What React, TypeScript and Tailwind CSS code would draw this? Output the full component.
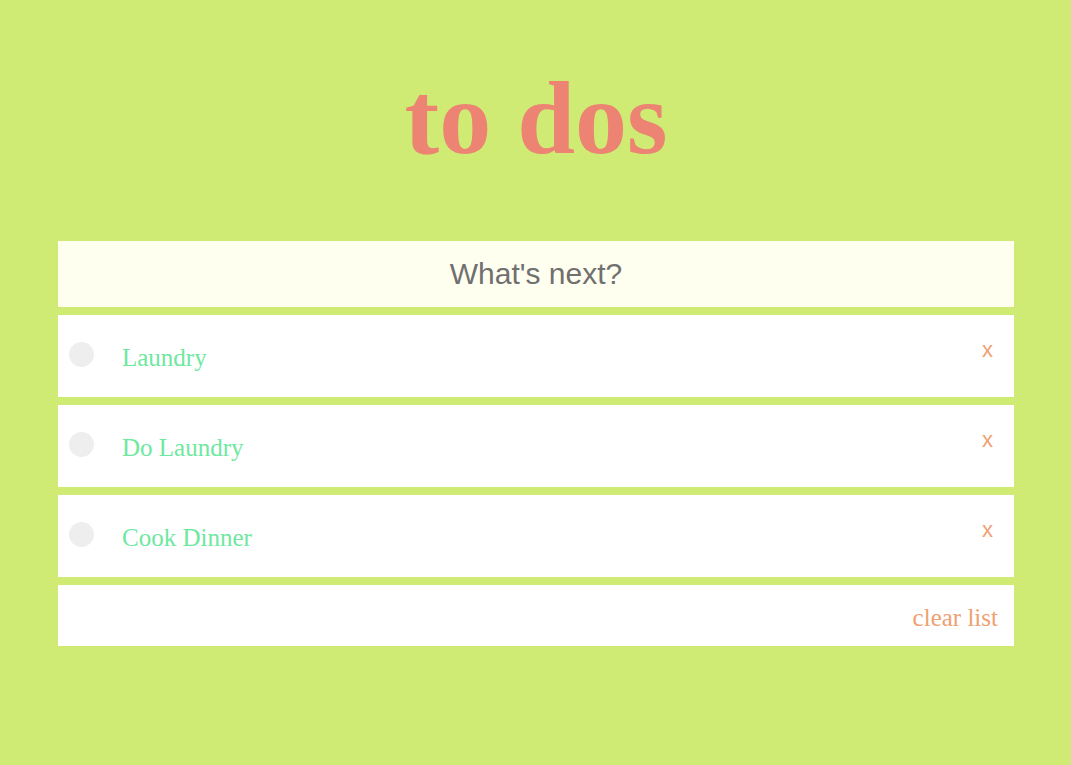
import React, { useState } from 'react';

const INITIAL = ['Laundry', 'Do Laundry', 'Cook Dinner'];

const App = () => {
  const [todos, setTodos] = useState<string[]>(INITIAL);
  const [draft, setDraft] = useState('');

  return (
    <div className="min-h-[765px] bg-[#cfeb73] pl-[58px] pr-[57px] pt-[58px]">
      <h1 className="text-center font-['Liberation_Serif',serif] text-[104px] font-bold leading-[120px] text-[#ec8373] mb-[63px]">
        to dos
      </h1>

      <div className="flex flex-col gap-2">
        <input
          value={draft}
          onChange={e => setDraft(e.target.value)}
          onKeyDown={e => {
            if (e.key === 'Enter' && draft.trim()) {
              setTodos([...todos, draft.trim()]);
              setDraft('');
            }
          }}
          placeholder="What's next?"
          className="h-[66px] w-full bg-[#fffff0] text-center font-['Liberation_Sans',sans-serif] text-[30px] text-[#707070] placeholder:text-[#707070] outline-none"
        />

        {todos.map((todo, i) => (
          <div key={i} className="flex h-[82px] items-start bg-white pl-[11px] pr-[21px]">
            <span className="mt-[27px] h-[25px] w-[25px] shrink-0 rounded-full bg-[#eeeeee]" />
            <span className="mt-[28px] ml-[28px] flex-1 font-['Liberation_Serif',serif] text-[25px] leading-[30px] text-[#6ee8a0]">
              {todo}
            </span>
            <button
              onClick={() => setTodos(todos.filter((_, j) => j !== i))}
              className="mt-[22px] font-['Liberation_Sans',sans-serif] text-[22px] leading-[26px] text-[#f0a070]"
            >
              x
            </button>
          </div>
        ))}

        <div className="flex h-[61px] items-center justify-end bg-white pr-[16px] pt-[4px]">
          <button
            onClick={() => setTodos([])}
            className="font-['Liberation_Serif',serif] text-[25px] leading-[30px] text-[#f0a070]"
          >
            clear list
          </button>
        </div>
      </div>
    </div>
  );
};

export default App;
